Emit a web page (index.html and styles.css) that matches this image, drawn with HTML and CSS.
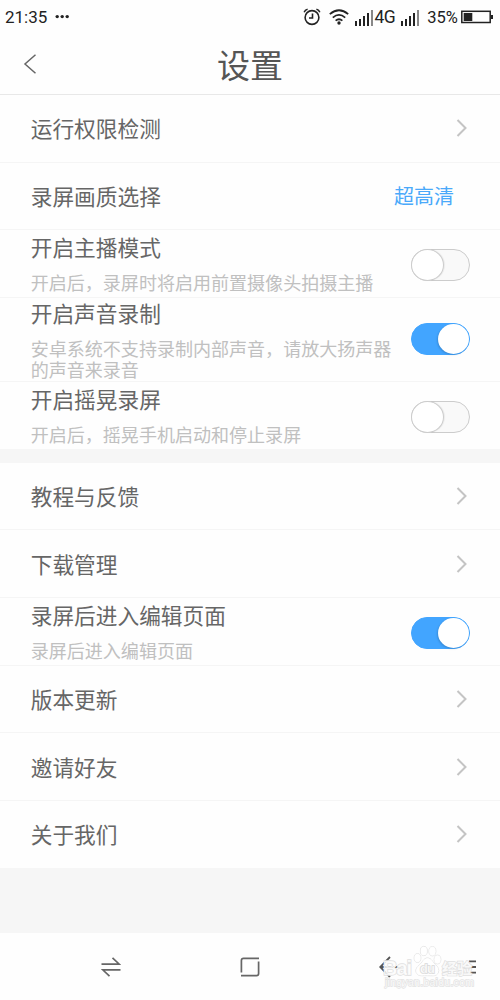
FILE: index.html
```html
<!DOCTYPE html>
<html lang="zh-CN">
<head>
<meta charset="utf-8">
<title>设置</title>
<link rel="stylesheet" href="styles.css">
</head>
<body>
<div class="screen">
  <div class="status">
    <span class="time">21:35</span>
    <svg class="dots" width="16" height="6" viewBox="0 0 16 6"><g fill="#222"><circle cx="2.2" cy="2.6" r="1.7"/><circle cx="7.2" cy="2.6" r="1.7"/><circle cx="12.2" cy="2.6" r="1.7"/></g></svg>
    <svg class="alarm" width="18" height="18" viewBox="0 0 18 18" fill="none" stroke="#222" stroke-width="1.6"><circle cx="9" cy="9.5" r="6.9"/><path d="M9.5 5.5v4.5H6M1.2 4.2Q2 1.8 4.6 1.2M16.8 4.2Q16 1.8 13.4 1.2"/></svg>
    <svg class="wifi" width="20" height="16" viewBox="0 0 20 16" fill="none" stroke="#222" stroke-width="1.7"><path d="M.8 5.2Q10-2.7 19.2 5.2M3.8 8.6Q10 3.2 16.2 8.6M6.6 11.7Q10 8.8 13.4 11.7"/><circle cx="10" cy="14" r="1.7" fill="#222" stroke="none"/></svg>
    <svg class="signal" width="18" height="17" viewBox="0 0 18 17"><path fill="#222" d="M0 12h2v5H0zM4 10h2v7H4zM8 7h2v10H8zM12 4h2v13h-2z"/><path fill="#888" d="M16 1h2v16h-2z"/></svg>
    <span class="net">4G</span>
    <svg class="signal second" width="18" height="17" viewBox="0 0 18 17"><path fill="#222" d="M0 12h2v5H0zM4 10h2v7H4zM8 7h2v10H8zM12 4h2v13h-2z"/><path fill="#888" d="M16 1h2v16h-2z"/></svg>
    <span class="percent">35%</span>
    <svg class="battery" width="33" height="14" viewBox="0 0 33 14"><rect x=".8" y="1.3" width="28.4" height="11.2" fill="none" stroke="#222" stroke-width="1.5"/><path fill="#222" d="M2.7 3h8.6v8H2.7zM30 5h2v4h-2z"/></svg>
  </div>
  <div class="header">
    <svg class="back" width="14" height="20" viewBox="0 0 14 20" fill="none" stroke="#666" stroke-width="1.5"><path d="M12.5 .8 2 10 12.5 19.2"/></svg>
    <h1>设置</h1>
  </div>
  <div class="list">
    <div class="row"><span class="label">运行权限检测</span><svg class="chev" viewBox="0 0 12 18"><path d="M1.5 1 9.5 9 1.5 17"/></svg></div>
    <div class="row"><span class="label">录屏画质选择</span><span class="value">超高清</span></div>
    <div class="row double"><div class="texts"><div class="label">开启主播模式</div><div class="sub">开启后，录屏时将启用前置摄像头拍摄主播</div></div><span class="switch low"><i class="knob"></i></span></div>
    <div class="row double tall"><div class="texts"><div class="label">开启声音录制</div><div class="sub">安卓系统不支持录制内部声音，请放大扬声器<br>的声音来录音</div></div><span class="switch on"><i class="knob"></i></span></div>
    <div class="row double"><div class="texts"><div class="label">开启摇晃录屏</div><div class="sub">开启后，摇晃手机启动和停止录屏</div></div><span class="switch low"><i class="knob"></i></span></div>
  </div>
  <div class="list">
    <div class="row"><span class="label">教程与反馈</span><svg class="chev" viewBox="0 0 12 18"><path d="M1.5 1 9.5 9 1.5 17"/></svg></div>
    <div class="row"><span class="label">下载管理</span><svg class="chev" viewBox="0 0 12 18"><path d="M1.5 1 9.5 9 1.5 17"/></svg></div>
    <div class="row double"><div class="texts"><div class="label">录屏后进入编辑页面</div><div class="sub">录屏后进入编辑页面</div></div><span class="switch on low"><i class="knob"></i></span></div>
    <div class="row"><span class="label">版本更新</span><svg class="chev" viewBox="0 0 12 18"><path d="M1.5 1 9.5 9 1.5 17"/></svg></div>
    <div class="row"><span class="label">邀请好友</span><svg class="chev" viewBox="0 0 12 18"><path d="M1.5 1 9.5 9 1.5 17"/></svg></div>
    <div class="row"><span class="label">关于我们</span><svg class="chev" viewBox="0 0 12 18"><path d="M1.5 1 9.5 9 1.5 17"/></svg></div>
  </div>
  <div class="nav">
    <svg class="swap" width="20" height="20" viewBox="0 0 20 20" fill="none" stroke="#666" stroke-width="1.7"><path d="M.5 7.2H18.3L11.5.8M19.5 12.8H1.7L8.5 19.2"/></svg>
    <svg class="home" width="20" height="20" viewBox="0 0 20 20" fill="none" stroke="#666" stroke-width="1.7"><path d="M1.4 15.5V3.4Q1.4 1.3 3.5 1.3H19M18.6 4.5V16.6Q18.6 18.7 16.5 18.7H1"/></svg>
    <svg class="prev" width="20" height="22" viewBox="0 0 20 22" fill="none" stroke="#555" stroke-width="1.8"><path d="M11 1 1.2 11 11 21M1 11H19"/></svg>
    <svg class="menu" width="7" height="14" viewBox="0 0 7 14" stroke="#555" stroke-width="1.8"><path d="M0 1.3h7M0 7h7M0 12.7h7"/></svg>
    <svg class="mark" width="96" height="46" viewBox="0 0 96 46">
      <g class="paw"><ellipse cx="36.5" cy="17" rx="3.3" ry="4.3"/><ellipse cx="42.8" cy="10" rx="3.4" ry="4.6"/><ellipse cx="51.4" cy="10.2" rx="3.4" ry="4.6"/><ellipse cx="56.5" cy="18.5" rx="3.3" ry="4.3"/><path d="M46.500 17c-4 0-4.800 4.500-8.300 7.200C32 29 35.500 35 41 34.700c3-.2 8 0 11 0 5.300.3 8.200-6 2.800-10.700C51.500 21.300 50.500 17 46.500 17z"/></g>
      <text class="bai" x="2" y="34" textLength="29">Bai</text>
      <text class="du" x="39" y="32" textLength="15">du</text>
      <text class="jy" x="61" y="32.500" textLength="30">经验</text>
      <text class="url" x="4" y="46" dy="-1" textLength="89">jingyan.baidu.com</text>
    </svg>
  </div>
</div>
</body>
</html>
```
FILE: styles.css
```css
* { box-sizing: border-box; }
body {
  margin: 0;
  background: #f6f6f6;
  font-family: "Noto Sans CJK SC", sans-serif;
  font-weight: 400;
  color: #666;
}
svg { flex: none; display: block; }
.screen { width: 500px; height: 1000px; display: flex; flex-direction: column; overflow: hidden; }
.status {
  height: 34px;
  flex: none;
  display: flex;
  align-items: center;
  padding: 0 6px 0 5px;
  background: #fefefe;
  font-family: Roboto, sans-serif;
  font-weight: 400;
  font-size: 17px;
  line-height: 34px;
  color: #222;
}
.time { width: 50px; }
.alarm { margin: 0 8px 0 232px; }
.wifi { margin-right: 6px; }
.signal { margin-right: 2px; }
.net { width: 27px; font-size: 17.5px; letter-spacing: -.7px; }
.signal.second { margin-right: 8px; }
.percent { width: 34px; font-size: 16.5px; padding-top: 2px; white-space: nowrap; }
.header {
  height: 61px;
  flex: none;
  display: grid;
  grid-template-columns: 1fr auto 1fr;
  align-items: center;
  padding: 0 23px;
  background: #fefefe;
  border-bottom: 1px solid #e8e8e8;
}
h1 { margin: 0; font-size: 33px; font-weight: 400; line-height: 60px; color: #555; }
.list { background: #fefefe; margin-bottom: 13.5px; flex: none; }
.list + .list { margin-bottom: 65px; }
.row {
  height: 67.6px;
  display: flex;
  align-items: center;
  justify-content: space-between;
  padding: 0 32px 0 30.7px;
  border-bottom: 1px solid #f5f5f5;
}
.row:last-child { border-bottom-color: transparent; }
.label { font-size: 21.7px; line-height: 32px; white-space: nowrap; }
.value { font-size: 20px; line-height: 30px; color: #4aa9fa; padding: 1px 14px 0 0; }
.chev { width: 12px; height: 18px; fill: none; stroke: #c4c4c4; stroke-width: 2; }
.double { align-items: flex-start; }
.texts { padding-top: 1px; }
.sub { margin-top: 9px; font-size: 18.05px; line-height: 21px; color: #c0c0c0; white-space: nowrap; }
.tall { height: 84px; align-items: center; }
.tall .texts { padding: 0; height: 84px; }
.switch {
  width: 59px;
  height: 32px;
  flex: none;
  display: flex;
  border: 1px solid #ccc;
  border-radius: 16px;
  background: #f9f9f9;
}
.row .switch { margin-right: -2px; }
.low { margin-top: 19px; }
.knob { width: 33px; height: 32px; margin: -1px; border: 1px solid #ccc; border-radius: 50%; background: #fff; box-shadow: 1px 0 1px rgba(0,0,0,.06); }
.switch.on { justify-content: flex-end; background: #42a5ff; border-color: #42a5ff; }
.switch.on .knob { width: 31px; height: 30px; margin: 0; border: 0; box-shadow: -1px 1px 2px rgba(0,0,0,.15); }
.nav {
  position: relative;
  height: 67px;
  flex: none;
  display: flex;
  align-items: center;
  padding-left: 101px;
  background: #fefefe;
}
.home { margin-left: 119px; }
.prev { margin-left: 119px; }
.menu { margin-left: 70px; }
.mark {
  position: absolute;
  left: 381px;
  top: 8px;
  overflow: visible;
  font-family: "Liberation Sans", "Noto Sans CJK SC", sans-serif;
  font-weight: 700;
  fill: rgba(255,255,255,.8);
  stroke: #e0e0e0;
  stroke-width: 1.4px;
  paint-order: stroke;
}
.paw { stroke-width: 1px; }
.bai { font-size: 20px; }
.du { font-size: 13px; stroke: #d8d8d8; }
.jy { font-size: 15px; }
.url { font-size: 10.5px; font-weight: 400; stroke-width: 1.3px; stroke: #e2e2e2; }
```
